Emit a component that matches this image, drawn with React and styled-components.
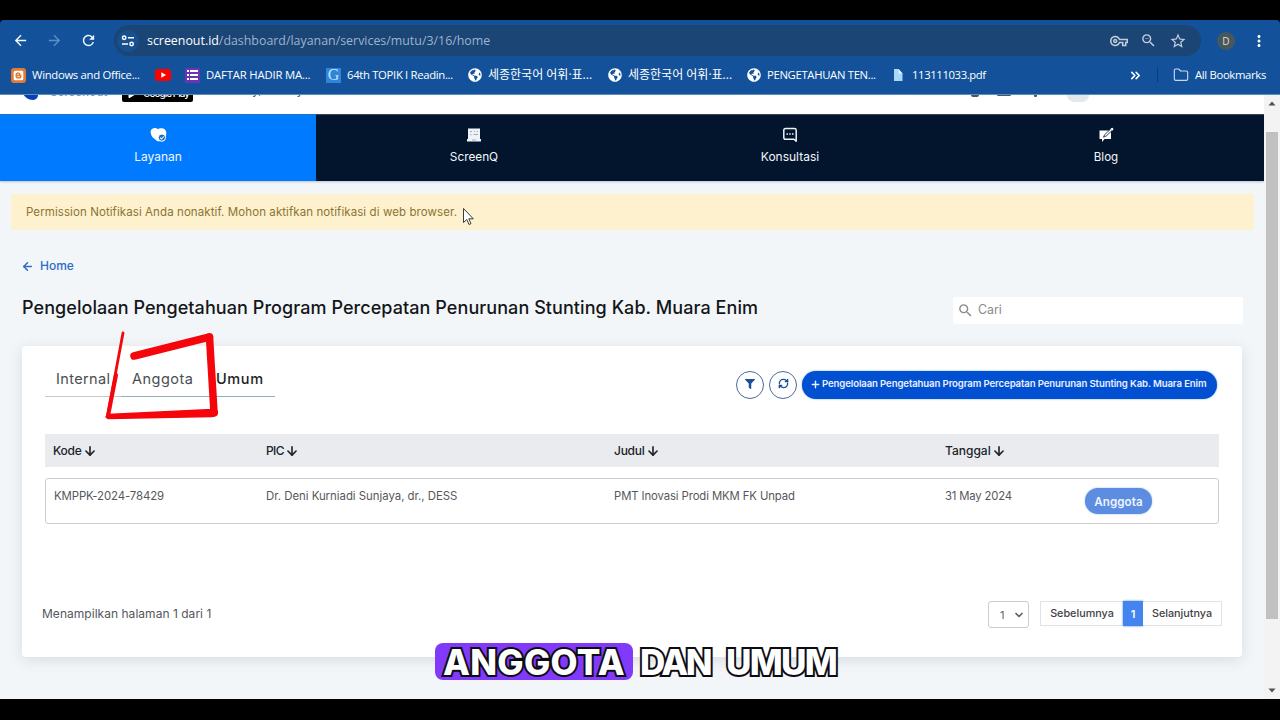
import styled, { createGlobalStyle } from 'styled-components'
import { MdArrowBack, MdArrowForward, MdRefresh, MdStarBorder, MdMoreVert, MdOutlineVpnKey, MdZoomOut, MdSearch } from 'react-icons/md'
import { FaFilter, FaGlobeAmericas, FaPlay, FaBlogger } from 'react-icons/fa'
import { ArrowDown, ArrowLeft, ChevronsRight, ChevronDown, Folder, Plus, RefreshCw } from 'lucide-react'

const GlobalStyle = createGlobalStyle`
  *{
    box-sizing: border-box;
    padding: 0;
    margin: 0;
  }

  body{
    background: #000;
    overflow: hidden;
  }

  svg{
    display: block;
    flex-shrink: 0;
  }
`

const Screen = styled.div`
  position: relative;
  width: 1280px;
  height: 720px;
  padding: 20px 0 21px;
  background: #000;
  display: flex;
  flex-direction: column;
  font-family: Inter, sans-serif;
  overflow: hidden;
`

const Text = styled.span`
  font-size: ${(p) => p.$size || 12}px;
  font-weight: ${(p) => p.$weight || 400};
  letter-spacing: ${(p) => p.$ls || 0}px;
  line-height: 16px;
  white-space: nowrap;
`

/* browser */

const Chrome = styled.header`
  height: 75px;
  flex-shrink: 0;
  background: #13529b;
  border-bottom: 1px solid #5c8fbf;
  border-radius: 4px 4px 0 0;
  color: #fff;
  font-family: "Open Sans", "Noto Sans CJK KR", sans-serif;
`

const Toolbar = styled.div`
  height: 41px;
  padding: 0 12px 0 12px;
  display: flex;
  align-items: center;
`

const NavIcon = styled.div`
  width: 34px;
  flex-shrink: 0;
  color: ${(p) => (p.$dim ? '#5c8ec6' : '#f2f7fc')};
`

const Omnibox = styled.div`
  width: 1087px;
  height: 31px;
  flex-shrink: 0;
  border-radius: 16px;
  background: #1a4574;
  display: flex;
  align-items: center;
  padding: 0 14px 0 3px;
  color: #c3cedb;
`

const SiteInfo = styled.div`
  width: 22px;
  height: 22px;
  border-radius: 50%;
  background: #16508f;
  display: flex;
  align-items: center;
  justify-content: center;
  margin-right: 8px;
`

const Url = styled(Text)`
  flex: 1;
  color: #9cb4d0;

  b{
    color: #fff;
    font-weight: 400;
  }
`

const OmniIcons = styled.div`
  display: flex;
  align-items: center;
  gap: 12px;
`

const Avatar = styled.div`
  width: 18px;
  height: 18px;
  margin: 0 auto 0 16px;
  border-radius: 50%;
  background: #46585e;
  color: #e3dfc4;
  font-size: 10px;
  display: flex;
  align-items: center;
  justify-content: center;
`

const Bookmarks = styled.div`
  height: 28px;
  padding: 0 13px 0 11px;
  display: flex;
  align-items: center;
`

const Bookmark = styled.div`
  width: ${(p) => p.$w}px;
  display: flex;
  align-items: center;
  gap: 6px;
`

const Divider = styled.i`
  width: 1px;
  height: 14px;
  margin: 0 15px 0 14px;
  background: #0c3b75;
`

const Favicon = styled.i`
  width: 15px;
  height: 15px;
  flex-shrink: 0;
  border-radius: ${(p) => p.$r ?? 3}px;
  background: ${(p) => p.$bg};
  display: flex;
  align-items: center;
  justify-content: center;
  color: ${(p) => p.$color || '#fff'};
  font: 16px "Liberation Serif", serif;
`

/* page */

const Viewport = styled.div`
  flex: 1;
  display: flex;
  min-height: 0;
`

const Page = styled.div`
  width: 1264px;
  background: #f3f6f8;
  overflow: hidden;
`

const Scrollbar = styled.div`
  width: 16px;
  background: #f2f3f2;
  padding: 6px 2px;
  display: flex;
  flex-direction: column;
  align-items: center;
`

const Thumb = styled.div`
  width: 12px;
  height: 487px;
  margin: 26px 0 auto;
  background: #c1c1c1;
`

/* only the lower edge of this strip is left after scrolling */
const TopStrip = styled.div`
  height: 19px;
  background: #fff;
  display: flex;
  align-items: flex-start;
  overflow: hidden;
  padding-left: 22px;
`

const LogoMark = styled.i`
  width: 16px;
  height: 17px;
  margin: -12px 12px 0 0;
  background: #0a3fb5;
  border-radius: 4px 4px 6px 14px;
`

const LogoName = styled(Text)`
  width: 72px;
  margin-top: -11px;
  color: #8497b8;
`

const StoreBadge = styled.div`
  width: 71px;
  height: 22px;
  margin-top: -15px;
  border-radius: 2px;
  background: #000;
  color: #fff;
  display: flex;
  align-items: flex-end;
  gap: 7px;
  padding: 0 0 1px 6px;

  svg{
    margin-bottom: 3px;
  }
`

const Greeting = styled(Text)`
  width: 719px;
  margin: -13px 0 0 59px;
  color: #44506a;
  word-spacing: 14px;
`

const TopIcon = styled.i`
  width: ${(p) => p.$w}px;
  height: ${(p) => p.$h}px;
  margin-right: ${(p) => p.$gap || 0}px;
  border-radius: 0 0 ${(p) => p.$r || 1}px ${(p) => p.$r || 1}px;
  background: ${(p) => p.$bg || '#4a5568'};
`

const Nav = styled.nav`
  height: 67px;
  display: grid;
  grid-template-columns: repeat(4, 1fr);
  background: #03142d;
  box-shadow: 0 1px 2px #b9c2d0;
`

const NavItem = styled.a`
  background: ${(p) => (p.$active ? '#007bff' : 'transparent')};
  border-top: 1px solid ${(p) => (p.$active ? '#2173c9' : '#3b4658')};
  color: #f3f6fa;
  display: flex;
  flex-direction: column;
  align-items: center;
  padding-top: 12px;
  gap: 6px;
`

const Alert = styled.div`
  height: 36px;
  margin: 13px 10px 0 11px;
  padding: 10px 15px;
  background: #fef1ce;
  border-radius: 3px;
  color: #8b7433;
  line-height: 16px;
  display: flex;
`

const BackLink = styled.a`
  display: flex;
  align-items: center;
  gap: 6px;
  margin: 28px 0 0 21px;
  height: 16px;
  color: #2b6cc9;
`

const TitleRow = styled.div`
  height: 27px;
  margin: 23px 21px 0 22px;
  display: flex;
  justify-content: space-between;
`

const Title = styled.h1`
  font-size: 18px;
  font-weight: 500;
  letter-spacing: 0.07px;
  line-height: 21px;
  color: #14161a;
  white-space: nowrap;
`

const Search = styled.div`
  width: 290px;
  height: 27px;
  border-radius: 3px;
  background: #fff;
  display: flex;
  align-items: center;
  gap: 4px;
  padding: 0 0 1px 4px;
  color: #8b8b8b;
`

const Card = styled.section`
  height: 311px;
  margin: 22px 22px 0;
  padding: 15px 23px 0;
  background: #fff;
  border-radius: 4px;
  box-shadow: 0 3px 14px rgba(60, 70, 80, 0.14);
`

const CardTop = styled.div`
  height: 73px;
  display: flex;
  justify-content: space-between;
  align-items: flex-start;
`

const Tabs = styled.div`
  height: 36px;
  width: 230px;
  display: grid;
  grid-template-columns: 76px 84px 70px;
`

const Tab = styled.a`
  padding: 7px 0 0 11px;
  border-bottom: 1px solid ${(p) => p.$line || '#8bb3b6'};
  color: ${(p) => (p.$active ? '#1d1f24' : '#4a4e52')};
`

const Actions = styled.div`
  display: flex;
  gap: 5px;
  padding: 10px 2px 0 0;
`

const RoundButton = styled.button`
  width: 28px;
  height: 28px;
  border: 1px solid #4c6a98;
  border-radius: 50%;
  background: #fff;
  color: #1b4e9b;
  display: flex;
  align-items: center;
  justify-content: center;
  padding-bottom: 3px;
`

const AddButton = styled.button`
  width: 415px;
  height: 28px;
  border: none;
  border-radius: 14px;
  background: #0150d2;
  box-shadow: 0 0 2px #5fa0ee;
  color: #e9f1ff;
  font-family: inherit;
  display: flex;
  align-items: center;
  gap: 1px;
  padding: 0 0 2px 8px;
`

const TableHead = styled.div`
  height: 33px;
  background: #e9ebef;
  display: grid;
  grid-template-columns: 221px 348px 331px 140px 1fr;
  align-items: center;
  color: #202328;
`

const HeadCell = styled.div`
  display: flex;
  align-items: center;
  gap: 1px;
  padding-left: ${(p) => p.$pl || 0}px;
`

const TableRow = styled.div`
  height: 46px;
  margin-top: 11px;
  border: 1px solid #cbcdd0;
  border-radius: 3px;
  display: grid;
  grid-template-columns: 220px 348px 331px 140px 1fr;
  color: #55585c;
  padding-top: 9px;
`

const Cell = styled(Text)`
  padding-left: ${(p) => p.$pl || 0}px;
`

const MemberButton = styled.button`
  width: 67px;
  height: 26px;
  border: none;
  border-radius: 13px;
  background: #5c8de1;
  box-shadow: 0 0 2px #8db6f0;
  color: #eef4ff;
  font-family: inherit;
`

const CardFooter = styled.div`
  margin: 77px -3px 0;
  display: flex;
  align-items: flex-start;
`

const PageInfo = styled(Text)`
  width: 946px;
  margin-top: 5px;
  color: #54575c;
`

const PageSelect = styled.div`
  width: 41px;
  height: 27px;
  margin-right: 11px;
  border: 1px solid #c9ccd1;
  border-radius: 3px;
  display: flex;
  align-items: center;
  justify-content: space-between;
  padding: 0 3px 0 11px;
  color: #5f6369;
`

const Pager = styled.div`
  display: flex;
  width: 182px;
  height: 25px;
  border: 1px solid #dfe2e6;
  color: #3e4045;
`

const PageButton = styled.div`
  width: ${(p) => p.$w}px;
  height: ${(p) => (p.$active ? 25 : 23)}px;
  margin-top: ${(p) => (p.$active ? -1 : 0)}px;
  background: ${(p) => (p.$active ? '#4384ee' : '#fff')};
  box-shadow: ${(p) => (p.$active ? '0 0 2px #4384ee' : 'none')};
  color: ${(p) => (p.$active ? '#fff' : 'inherit')};
  display: flex;
  align-items: center;
  justify-content: center;
`

/* video overlays */

const Pointer = styled.svg`
  position: absolute;
  left: 462px;
  top: 207px;
`

const Marker = styled.svg`
  position: absolute;
  left: 100px;
  top: 325px;
`

const Caption = styled.div`
  position: absolute;
  left: 435px;
  top: 643px;
  height: 37px;
  display: flex;
  align-items: center;
  color: #fff;
  font: 800 35px/38px Inter, sans-serif;
`

const CaptionWord = styled.span`
  height: 37px;
  width: ${(p) => p.$w}px;
  padding-left: ${(p) => p.$pl}px;
  border-radius: 8px;
  background: ${(p) => (p.$active ? '#8139fa' : 'transparent')};
  letter-spacing: ${(p) => p.$ls}px;
  -webkit-text-stroke: 4px #0d0b12;
  paint-order: stroke fill;
  white-space: nowrap;
`

const TuneIcon = () => (
  <svg width="14" height="14" viewBox="0 0 14 14" fill="none" stroke="#fff" strokeWidth="1.5">
    <circle cx="3.2" cy="3.8" r="1.7" />
    <path d="M7 3.8h6M1 10h6" />
    <circle cx="10.6" cy="10" r="1.7" />
  </svg>
)

const FormIcon = () => (
  <svg width="11" height="10" viewBox="0 0 11 10" fill="#fff">
    <path d="M0 0h2v2H0zM3 0h8v2H3zM0 4h2v2H0zM3 4h8v2H3zM0 8h2v2H0zM3 8h8v2H3z" />
  </svg>
)

const PdfIcon = () => (
  <svg width="15" height="13" viewBox="0 0 15 13">
    <path d="M3 0h4.500l4 4.500V12H3z" fill="#a9d8fb" />
    <path d="M7.500 0v4.500h4z" fill="#e6f5ff" />
  </svg>
)

const HeartIcon = () => (
  <svg width="17" height="16" viewBox="0 0 17 16">
    <path d="M8 2.2C5.600 0 1 .8.6 4.600.4 9 4 12 7.500 14.200h6l2.500-5C16.800 5 16 2.200 13 1.500 11 1 9 1.400 8 2.200z" fill="#fff" />
    <circle cx="11.900" cy="10.600" r="3.600" fill="#1d6ec2" stroke="#fff" strokeWidth="1" />
    <path d="M10.200 10.700l1.300 1.300 2.300-2.500" fill="none" stroke="#fff" strokeWidth="1.100" />
  </svg>
)

const ScreenIcon = () => (
  <svg width="16" height="16" viewBox="0 0 16 16">
    <path d="M2 1.500h12V12H2zM1 12h14v2.500H1z" fill="#eef3fa" />
    <path d="M4 4.500h2M8 4.500h1M10.500 4.500H12M4 7l1.500 1M7.500 7.500H12M6 13h4" stroke="#a3acb9" strokeWidth="1" />
  </svg>
)

const ChatIcon = () => (
  <svg width="16" height="16" viewBox="0 0 16 16">
    <path d="M3.500 1.500h9q1.700 0 1.700 1.700V14.300L12 12.300H3.500q-1.700 0-1.700-1.700V3.200q0-1.700 1.700-1.700z" fill="none" stroke="#eef3fa" strokeWidth="1.500" strokeLinejoin="round" />
    <path d="M4.500 7h1.500M7.250 7h1.500M10 7h1.500" stroke="#eef3fa" strokeWidth="1.500" />
  </svg>
)

const BlogIcon = () => (
  <svg width="16" height="16" viewBox="0 0 16 16">
    <path d="M1.500 3.500H13V12H6.500L4 15v-3H1.500z" fill="#fff" />
    <path d="M5.500 10.200l1.200-2.600L12.800 1.800l1.500 1.500L8.200 9z" fill="#fff" stroke="#03142d" strokeWidth="0.8" />
    <path d="M12.500 2l1-1q.6-.4 1.200 0l.5.5q.4.600 0 1.200l-1 1z" fill="#fff" />
  </svg>
)

const heads = [
  { label: 'Kode', pl: 8, ls: -0.25 },
  { label: 'PIC', ls: -0.6 },
  { label: 'Judul', ls: -0.25 },
  { label: 'Tanggal', ls: 0 },
]

function App() {
  return (
    <Screen>
      <GlobalStyle />
      <Chrome>
        <Toolbar>
          <NavIcon><MdArrowBack size={17} /></NavIcon>
          <NavIcon $dim><MdArrowForward size={17} /></NavIcon>
          <NavIcon><MdRefresh size={17} /></NavIcon>
          <Omnibox>
            <SiteInfo><TuneIcon /></SiteInfo>
            <Url $size={12.4}><b>screenout.id</b>/dashboard/layanan/services/mutu/3/16/home</Url>
            <OmniIcons>
              <MdOutlineVpnKey size={18} />
              <MdZoomOut size={17} />
              <MdStarBorder size={18} />
            </OmniIcons>
          </Omnibox>
          <Avatar>D</Avatar>
          <MdMoreVert size={18} />
        </Toolbar>
        <Bookmarks>
          <Bookmark $w={144}>
            <Favicon $bg="#e07a35"><FaBlogger size={11} /></Favicon>
            <Text $size={11.3} $ls={-0.3}>Windows and Office...</Text>
          </Bookmark>
          <Bookmark $w={30}>
            <svg width="16" height="12" viewBox="0 0 16 12">
              <rect width="16" height="12" rx="3" fill="#f00" />
              <path d="M6.300 3.300v5.400L11 6z" fill="#fff" />
            </svg>
          </Bookmark>
          <Bookmark $w={141}>
            <Favicon $bg="#6a35b5" $r={1}><FormIcon /></Favicon>
            <Text $size={11.3} $ls={-0.17}>DAFTAR HADIR MA...</Text>
          </Bookmark>
          <Bookmark $w={142}>
            <Favicon $bg="#2f86d8" $r={0} $color="#c5e4ff">G</Favicon>
            <Text $size={11.3} $ls={-0.32}>64th TOPIK I Readin...</Text>
          </Bookmark>
          <Bookmark $w={140}>
            <FaGlobeAmericas size={14} />
            <Text>세종한국어 어휘·표...</Text>
          </Bookmark>
          <Bookmark $w={139}>
            <FaGlobeAmericas size={14} />
            <Text>세종한국어 어휘·표...</Text>
          </Bookmark>
          <Bookmark $w={144}>
            <FaGlobeAmericas size={14} />
            <Text $size={11.3} $ls={-0.32}>PENGETAHUAN TEN...</Text>
          </Bookmark>
          <Bookmark $w={237}>
            <PdfIcon />
            <Text $size={11.3} $ls={-0.38}>113111033.pdf</Text>
          </Bookmark>
          <ChevronsRight size={15} strokeWidth={2.500} />
          <Divider />
          <Bookmark>
            <Folder size={16} strokeWidth={1.700} color="#c8d9ec" />
            <Text $size={11.3} $ls={-0.33}>All Bookmarks</Text>
          </Bookmark>
        </Bookmarks>
      </Chrome>

      <Viewport>
        <Page>
          <TopStrip>
            <LogoMark />
            <LogoName $size={11.500} $weight={600}>Screenout</LogoName>
            <StoreBadge>
              <FaPlay size={8} />
              <Text $size={10} $weight={500} $ls={-1}>Google Play</Text>
            </StoreBadge>
            <Greeting $size={12}>y, &nbsp;y</Greeting>
            <TopIcon $w={8} $h={2} $r={4} $gap={18} />
            <TopIcon $w={14} $h={1} $gap={23} />
            <TopIcon $w={3} $h={2} $gap={30} />
            <TopIcon $w={22} $h={7} $r={11} $bg="#e4e7eb" />
          </TopStrip>

          <Nav>
            <NavItem $active><HeartIcon /><Text>Layanan</Text></NavItem>
            <NavItem><ScreenIcon /><Text $size={11.8}>ScreenQ</Text></NavItem>
            <NavItem><ChatIcon /><Text>Konsultasi</Text></NavItem>
            <NavItem><BlogIcon /><Text $size={11.600}>Blog</Text></NavItem>
          </Nav>

          <Alert>
            <Text $size={11.5} $ls={0.086}>Permission Notifikasi Anda nonaktif. Mohon aktifkan notifikasi di web browser.</Text>
          </Alert>

          <BackLink>
            <ArrowLeft size={13} strokeWidth={2.800} />
            <Text $weight={500}>Home</Text>
          </BackLink>

          <TitleRow>
            <Title>Pengelolaan Pengetahuan Program Percepatan Penurunan Stunting Kab. Muara Enim</Title>
            <Search>
              <MdSearch size={17} />
              <Text $size={12.4}>Cari</Text>
            </Search>
          </TitleRow>

          <Card>
            <CardTop>
              <Tabs>
                <Tab $line="#c3c8cc"><Text $size={14.5} $ls={0.37}>Internal</Text></Tab>
                <Tab><Text $size={14.5} $ls={0.5}>Anggota</Text></Tab>
                <Tab $active><Text $size={14.5} $weight={500} $ls={0.600}>Umum</Text></Tab>
              </Tabs>
              <Actions>
                <RoundButton><FaFilter size={10} /></RoundButton>
                <RoundButton><RefreshCw size={11} strokeWidth={3} /></RoundButton>
                <AddButton>
                  <Plus size={11} strokeWidth={3} />
                  <Text $size={9.600} $weight={600} $ls={-0.115}>Pengelolaan Pengetahuan Program Percepatan Penurunan Stunting Kab. Muara Enim</Text>
                </AddButton>
              </Actions>
            </CardTop>

            <TableHead>
              {heads.map((h) => (
                <HeadCell key={h.label} $pl={h.pl}>
                  <Text $weight={500} $ls={h.ls}>{h.label}</Text>
                  <ArrowDown size={14} strokeWidth={2.800} />
                </HeadCell>
              ))}
            </TableHead>

            <TableRow>
              <Cell $size={11.4} $ls={-0.11} $pl={8}>KMPPK-2024-78429</Cell>
              <Cell $size={11.4} $ls={-0.02}>Dr. Deni Kurniadi Sunjaya, dr., DESS</Cell>
              <Cell $size={11.3} $ls={-0.09}>PMT Inovasi Prodi MKM FK Unpad</Cell>
              <Cell $size={11.3} $ls={-0.17}>31 May 2024</Cell>
              <MemberButton><Text $size={11.600} $weight={600} $ls={0.100}>Anggota</Text></MemberButton>
            </TableRow>

            <CardFooter>
              <PageInfo $ls={0.03}>Menampilkan halaman 1 dari 1</PageInfo>
              <PageSelect>
                <Text $size={11}>1</Text>
                <ChevronDown size={12} strokeWidth={3.500} />
              </PageSelect>
              <Pager>
                <PageButton $w={82}><Text $size={10.800} $weight={500}>Sebelumnya</Text></PageButton>
                <PageButton $w={20} $active><Text $size={11} $weight={600}>1</Text></PageButton>
                <PageButton $w={78}><Text $size={10.800} $weight={500}>Selanjutnya</Text></PageButton>
              </Pager>
            </CardFooter>
          </Card>
        </Page>
        <Scrollbar>
          <svg width="8" height="5" viewBox="0 0 8 5"><path d="M4 .5L7.500 4.500H.5z" fill="#505050" /></svg>
          <Thumb />
          <svg width="8" height="5" viewBox="0 0 8 5"><path d="M4 4.500L7.500.5H.5z" fill="#505050" /></svg>
        </Scrollbar>
      </Viewport>

      <Pointer width="14" height="20" viewBox="0 0 14 20">
        <path d="M1.500 1.500v14l3.300-3 2.200 5 2-.9-2.200-4.800h4.500z" fill="#fff" stroke="#3a3a3a" strokeWidth="1" />
      </Pointer>

      <Marker width="124" height="100" viewBox="0 0 124 100" fill="none" stroke="#f4060c" strokeLinecap="round" strokeLinejoin="round">
        <path d="M23 8L7.500 91" strokeWidth="2.800" />
        <path d="M16 50L8 91" strokeWidth="4" />
        <path d="M6 92L8 89.500 112 84.500Q117 83.500 117.500 87.500 117 91.500 112 91.500L8 93.500z" fill="#f4060c" strokeWidth="1.500" />
        <path d="M114 87.500L109.500 12" strokeWidth="7.500" />
        <path d="M109.500 12L34 31" strokeWidth="7.500" />
      </Marker>

      <Caption>
        <CaptionWord $w={198} $pl={8} $ls={0.3} $active>ANGGOTA</CaptionWord>
        <CaptionWord $w={86} $pl={7} $ls={-2.5}>DAN</CaptionWord>
        <CaptionWord $w={120} $pl={7} $ls={-1.7}>UMUM</CaptionWord>
      </Caption>
    </Screen>
  )
}

export default App
